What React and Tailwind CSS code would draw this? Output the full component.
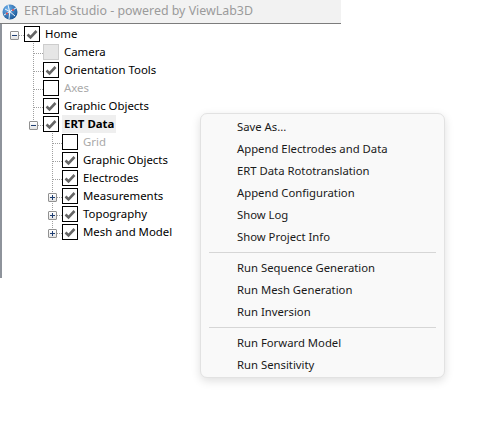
import React from "react";

const font = { fontFamily: '"Noto Sans", "Open Sans", sans-serif' };

const tree = [
  { label: "Home", depth: 0, state: "checked", open: true, last: true, lines: [] },
  { label: "Camera", depth: 1, state: "grey", lines: [false] },
  { label: "Orientation Tools", depth: 1, state: "checked", lines: [false] },
  { label: "Axes", depth: 1, state: "empty", disabled: true, lines: [false] },
  { label: "Graphic Objects", depth: 1, state: "checked", lines: [false] },
  { label: "ERT Data", depth: 1, state: "checked", open: true, last: true, bold: true, selected: true, lines: [false] },
  { label: "Grid", depth: 2, state: "empty", disabled: true, lines: [false, false] },
  { label: "Graphic Objects", depth: 2, state: "checked", lines: [false, false] },
  { label: "Electrodes", depth: 2, state: "checked", lines: [false, false] },
  { label: "Measurements", depth: 2, state: "checked", closed: true, lines: [false, false] },
  { label: "Topography", depth: 2, state: "checked", closed: true, lines: [false, false] },
  { label: "Mesh and Model", depth: 2, state: "checked", closed: true, last: true, lines: [false, false] },
];

const menu = [
  ["Save As...", "Append Electrodes and Data", "ERT Data Rototranslation", "Append Configuration", "Show Log", "Show Project Info"],
  ["Run Sequence Generation", "Run Mesh Generation", "Run Inversion"],
  ["Run Forward Model", "Run Sensitivity"],
];

function Globe() {
  return (
    <svg width="16" height="16" viewBox="0 0 16 16">
      <defs>
        <radialGradient id="g" cx="0.35" cy="0.3" r="0.8">
          <stop offset="0" stopColor="#6fb2ee" />
          <stop offset="1" stopColor="#14508f" />
        </radialGradient>
      </defs>
      <circle cx="8" cy="8" r="7.5" fill="url(#g)" />
      <path d="M2 11 Q7 8 14 4 M3 5 Q8 7 13 12 M6 1 Q9 8 7 15" stroke="#fff" strokeWidth="0.9" fill="none" />
      <circle cx="5" cy="9.5" r="1" fill="#e04040" />
      <circle cx="11" cy="6" r="1" fill="#e04040" />
    </svg>
  );
}

function Expander({ plus }) {
  return (
    <div className="absolute left-[5px] top-[6px] w-[9px] h-[9px] border border-[#919191] rounded-[1px] bg-gradient-to-b from-white to-[#e3e3e3] flex items-center justify-center">
      <svg width="7" height="7" viewBox="0 0 7 7">
        <path d="M1 3.5 H6" stroke="#1f3f73" strokeWidth="1" />
        {plus && <path d="M3.5 1 V6" stroke="#1f3f73" strokeWidth="1" />}
      </svg>
    </div>
  );
}

function Gutter({ through }) {
  return (
    <div className="w-[19px] h-[18px] shrink-0">
      {through && (
        <svg width="19" height="18">
          <line x1="9.5" y1="0" x2="9.5" y2="18" stroke="#a0a0a0" strokeDasharray="1 1" />
        </svg>
      )}
    </div>
  );
}

function NodeCell({ node }) {
  const root = node.depth === 0;
  return (
    <div className="relative w-[19px] h-[18px] shrink-0">
      <svg width="19" height="18" className="absolute left-0 top-0">
        {!root && (
          <line x1="9.5" y1="0" x2="9.5" y2={node.last ? 11 : 18} stroke="#a0a0a0" strokeDasharray="1 1" />
        )}
        <line x1="10" y1="10.5" x2="19" y2="10.5" stroke="#a0a0a0" strokeDasharray="1 1" />
      </svg>
      {(node.open || node.closed) && <Expander plus={node.closed} />}
    </div>
  );
}

function Check({ state }) {
  if (state === "grey") {
    return <div className="w-4 h-4 shrink-0 border border-[#cdcdcd] bg-[#e6e6e6]" />;
  }
  return (
    <div className="w-4 h-4 shrink-0 border border-black bg-white flex items-center justify-center">
      {state === "checked" && (
        <svg width="14" height="14" viewBox="0 0 14 14">
          <path d="M2.5 7.5 L5.5 10.3 L11.5 4" stroke="#666666" strokeWidth="2.6" fill="none" />
        </svg>
      )}
    </div>
  );
}

function TreeRow({ node }) {
  return (
    <div className="flex items-center h-[18px]">
      {node.lines.map((t, i) => (
        <Gutter key={i} through={t} />
      ))}
      <NodeCell node={node} />
      <Check state={node.state} />
      <div
        className={`ml-[3px] h-[18px] px-[2px] flex items-center text-[11.4px] leading-none ${
          node.selected ? "bg-[#efefef]" : ""
        } ${node.bold ? "font-bold" : ""} ${node.disabled ? "text-[#a9a9a9]" : "text-black"}`}
      >
        {node.label}
      </div>
    </div>
  );
}

export default function App() {
  return (
    <div className="relative w-[485px] h-[433px] bg-white overflow-hidden" style={font}>
      <div className="w-[341px]">
        <div className="h-[24px] bg-[#f2f2f2] border-b border-[#7c7c7c] flex items-center pl-[2px] gap-[6px]">
          <Globe />
          <span className="text-[12.4px] text-[#9b9b9b]">ERTLab Studio - powered by ViewLab3D</span>
        </div>
        <div className="h-[254px] border-l-2 border-[#8e939b] pt-[1px] pl-[3px]">
          {tree.map((n, i) => (
            <TreeRow key={i} node={n} />
          ))}
        </div>
      </div>

      <div className="absolute left-[200px] top-[113px] w-[245px] bg-[#f9f9f9] border border-[#e2e2e2] rounded-[7px] shadow-[0_3px_10px_rgba(0,0,0,0.13)] pt-[2px] pb-[1px]">
        {menu.map((group, gi) => (
          <div key={gi}>
            {gi > 0 && <div className="mx-[8px] my-[4px] h-px bg-[#d6d6d6]" />}
            {group.map((item) => (
              <div key={item} className="h-[22px] pl-[36px] flex items-center text-[11.3px] text-[#1a1a1a]">
                {item}
              </div>
            ))}
          </div>
        ))}
      </div>
    </div>
  );
}
